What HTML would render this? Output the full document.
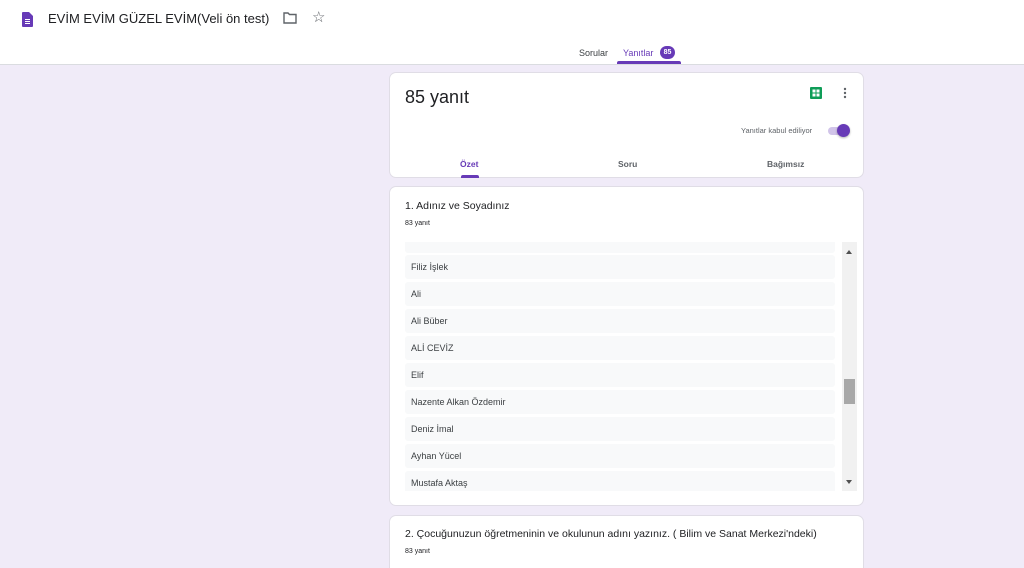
<!DOCTYPE html>
<html><head><meta charset="utf-8"><style>
*{box-sizing:border-box;margin:0;padding:0}
html,body{width:1024px;height:568px;overflow:hidden}
body{background:#f0ebf8;font-family:"Liberation Sans",Arial,sans-serif;position:relative;color:#202124}
.hdr{position:absolute;left:0;top:0;width:1024px;height:65px;background:#fff;border-bottom:1px solid #dadce0}
.card{position:absolute;left:389px;width:475px;background:#fff;border-radius:7px;border:1px solid #e0dde6}
.row{position:absolute;left:15px;width:430px;height:24px;background:#f8f9fa;border-radius:3px;font-size:9px;line-height:24px;padding-left:6px;color:#3c4043}
</style></head><body>
<div class="hdr">
 <svg style="position:absolute;left:22px;top:12px" width="11" height="15" viewBox="0 0 11 15"><path d="M0 1a1 1 0 0 1 1-1h6l4 4v10a1 1 0 0 1-1 1H1a1 1 0 0 1-1-1z" fill="#673ab7"/><rect x="3" y="7" width="5" height="1" fill="#fff"/><rect x="3" y="9" width="5" height="1" fill="#fff"/><rect x="3" y="11" width="5" height="1" fill="#fff"/></svg>
 <div style="position:absolute;left:48px;top:11px;font-size:13px;color:#202124;white-space:nowrap">EVİM EVİM GÜZEL EVİM(Veli ön test)</div>
 <svg style="position:absolute;left:283px;top:12px" width="14" height="12" viewBox="0 0 14 12"><path d="M1 1h4l1.5 1.5H13V11H1z" fill="none" stroke="#5f6368" stroke-width="1.4"/></svg>
 <div style="position:absolute;left:312px;top:8px;font-size:15px;color:#5f6368">☆</div>
 <div style="position:absolute;left:579px;top:48px;font-size:9px;color:#3c4043">Sorular</div>
 <div style="position:absolute;left:623px;top:48px;font-size:9px;color:#673ab7">Yanıtlar</div>
 <div style="position:absolute;left:660px;top:46px;width:15px;height:13px;border-radius:7px;background:#673ab7;color:#fff;font-size:7px;line-height:13px;text-align:center;font-weight:bold">85</div>
 <div style="position:absolute;left:617px;top:61px;width:64px;height:3px;background:#673ab7;border-radius:2px 2px 0 0"></div>
</div>

<div class="card" style="top:72px;height:106px">
 <div style="position:absolute;left:15px;top:14px;font-size:18px">85 yanıt</div>
 <svg style="position:absolute;left:420px;top:14px" width="12" height="12" viewBox="0 0 12 12"><rect width="12" height="12" rx="1" fill="#0f9d58"/><rect x="2.5" y="2.5" width="7" height="7" fill="#fff"/><rect x="2.5" y="5.5" width="7" height="1" fill="#0f9d58"/><rect x="5.5" y="2.5" width="1" height="7" fill="#0f9d58"/></svg>
 <svg style="position:absolute;left:453px;top:14px" width="4" height="12"><circle cx="2" cy="2" r="1.2" fill="#5f6368"/><circle cx="2" cy="6" r="1.2" fill="#5f6368"/><circle cx="2" cy="10" r="1.2" fill="#5f6368"/></svg>
 <div style="position:absolute;left:351px;top:53px;font-size:7.5px;color:#5f6368">Yanıtlar kabul ediliyor</div>
 <div style="position:absolute;left:438px;top:54px;width:22px;height:8px;border-radius:4px;background:#d1c4e9"></div>
 <div style="position:absolute;left:447px;top:51px;width:13px;height:13px;border-radius:50%;background:#673ab7;box-shadow:0 1px 2px rgba(0,0,0,.3)"></div>
 <div style="position:absolute;left:70px;top:86px;font-size:8.5px;color:#673ab7;font-weight:bold">Özet</div>
 <div style="position:absolute;left:71px;top:102px;width:18px;height:3px;background:#673ab7;border-radius:2px 2px 0 0"></div>
 <div style="position:absolute;left:228px;top:86px;font-size:8.5px;color:#5f6368;font-weight:bold">Soru</div>
 <div style="position:absolute;left:377px;top:86px;font-size:8.5px;color:#5f6368;font-weight:bold">Bağımsız</div>
</div>

<div class="card" style="top:186px;height:320px">
 <div style="position:absolute;left:15px;top:13px;font-size:10.5px">1. Adınız ve Soyadınız</div>
 <div style="position:absolute;left:15px;top:33px;font-size:7px">83 yanıt</div>
 <div style="position:absolute;left:0;top:55px;width:450px;height:249px;overflow:hidden">
  <div class="row" style="top:-13px"></div>
  <div class="row" style="top:13px">Filiz İşlek</div>
  <div class="row" style="top:40px">Ali</div>
  <div class="row" style="top:67px">Ali Büber</div>
  <div class="row" style="top:94px">ALİ CEVİZ</div>
  <div class="row" style="top:121px">Elif</div>
  <div class="row" style="top:148px">Nazente Alkan Özdemir</div>
  <div class="row" style="top:175px">Deniz İmal</div>
  <div class="row" style="top:202px">Ayhan Yücel</div>
  <div class="row" style="top:229px">Mustafa Aktaş</div>
 </div>
 <div style="position:absolute;left:452px;top:55px;width:15px;height:249px;background:#f1f1f1">
  <div style="position:absolute;left:4px;top:8px;border-left:3.5px solid transparent;border-right:3.5px solid transparent;border-bottom:4px solid #505050"></div>
  <div style="position:absolute;left:2px;top:137px;width:11px;height:25px;background:#a8a8a8"></div>
  <div style="position:absolute;left:4px;top:238px;border-left:3.5px solid transparent;border-right:3.5px solid transparent;border-top:4px solid #505050"></div>
 </div>
</div>

<div class="card" style="top:515px;height:60px">
 <div style="position:absolute;left:15px;top:12px;font-size:10.5px">2. Çocuğunuzun öğretmeninin ve okulunun adını yazınız. ( Bilim ve Sanat Merkezi'ndeki)</div>
 <div style="position:absolute;left:15px;top:32px;font-size:7px">83 yanıt</div>
</div>
</body></html>
